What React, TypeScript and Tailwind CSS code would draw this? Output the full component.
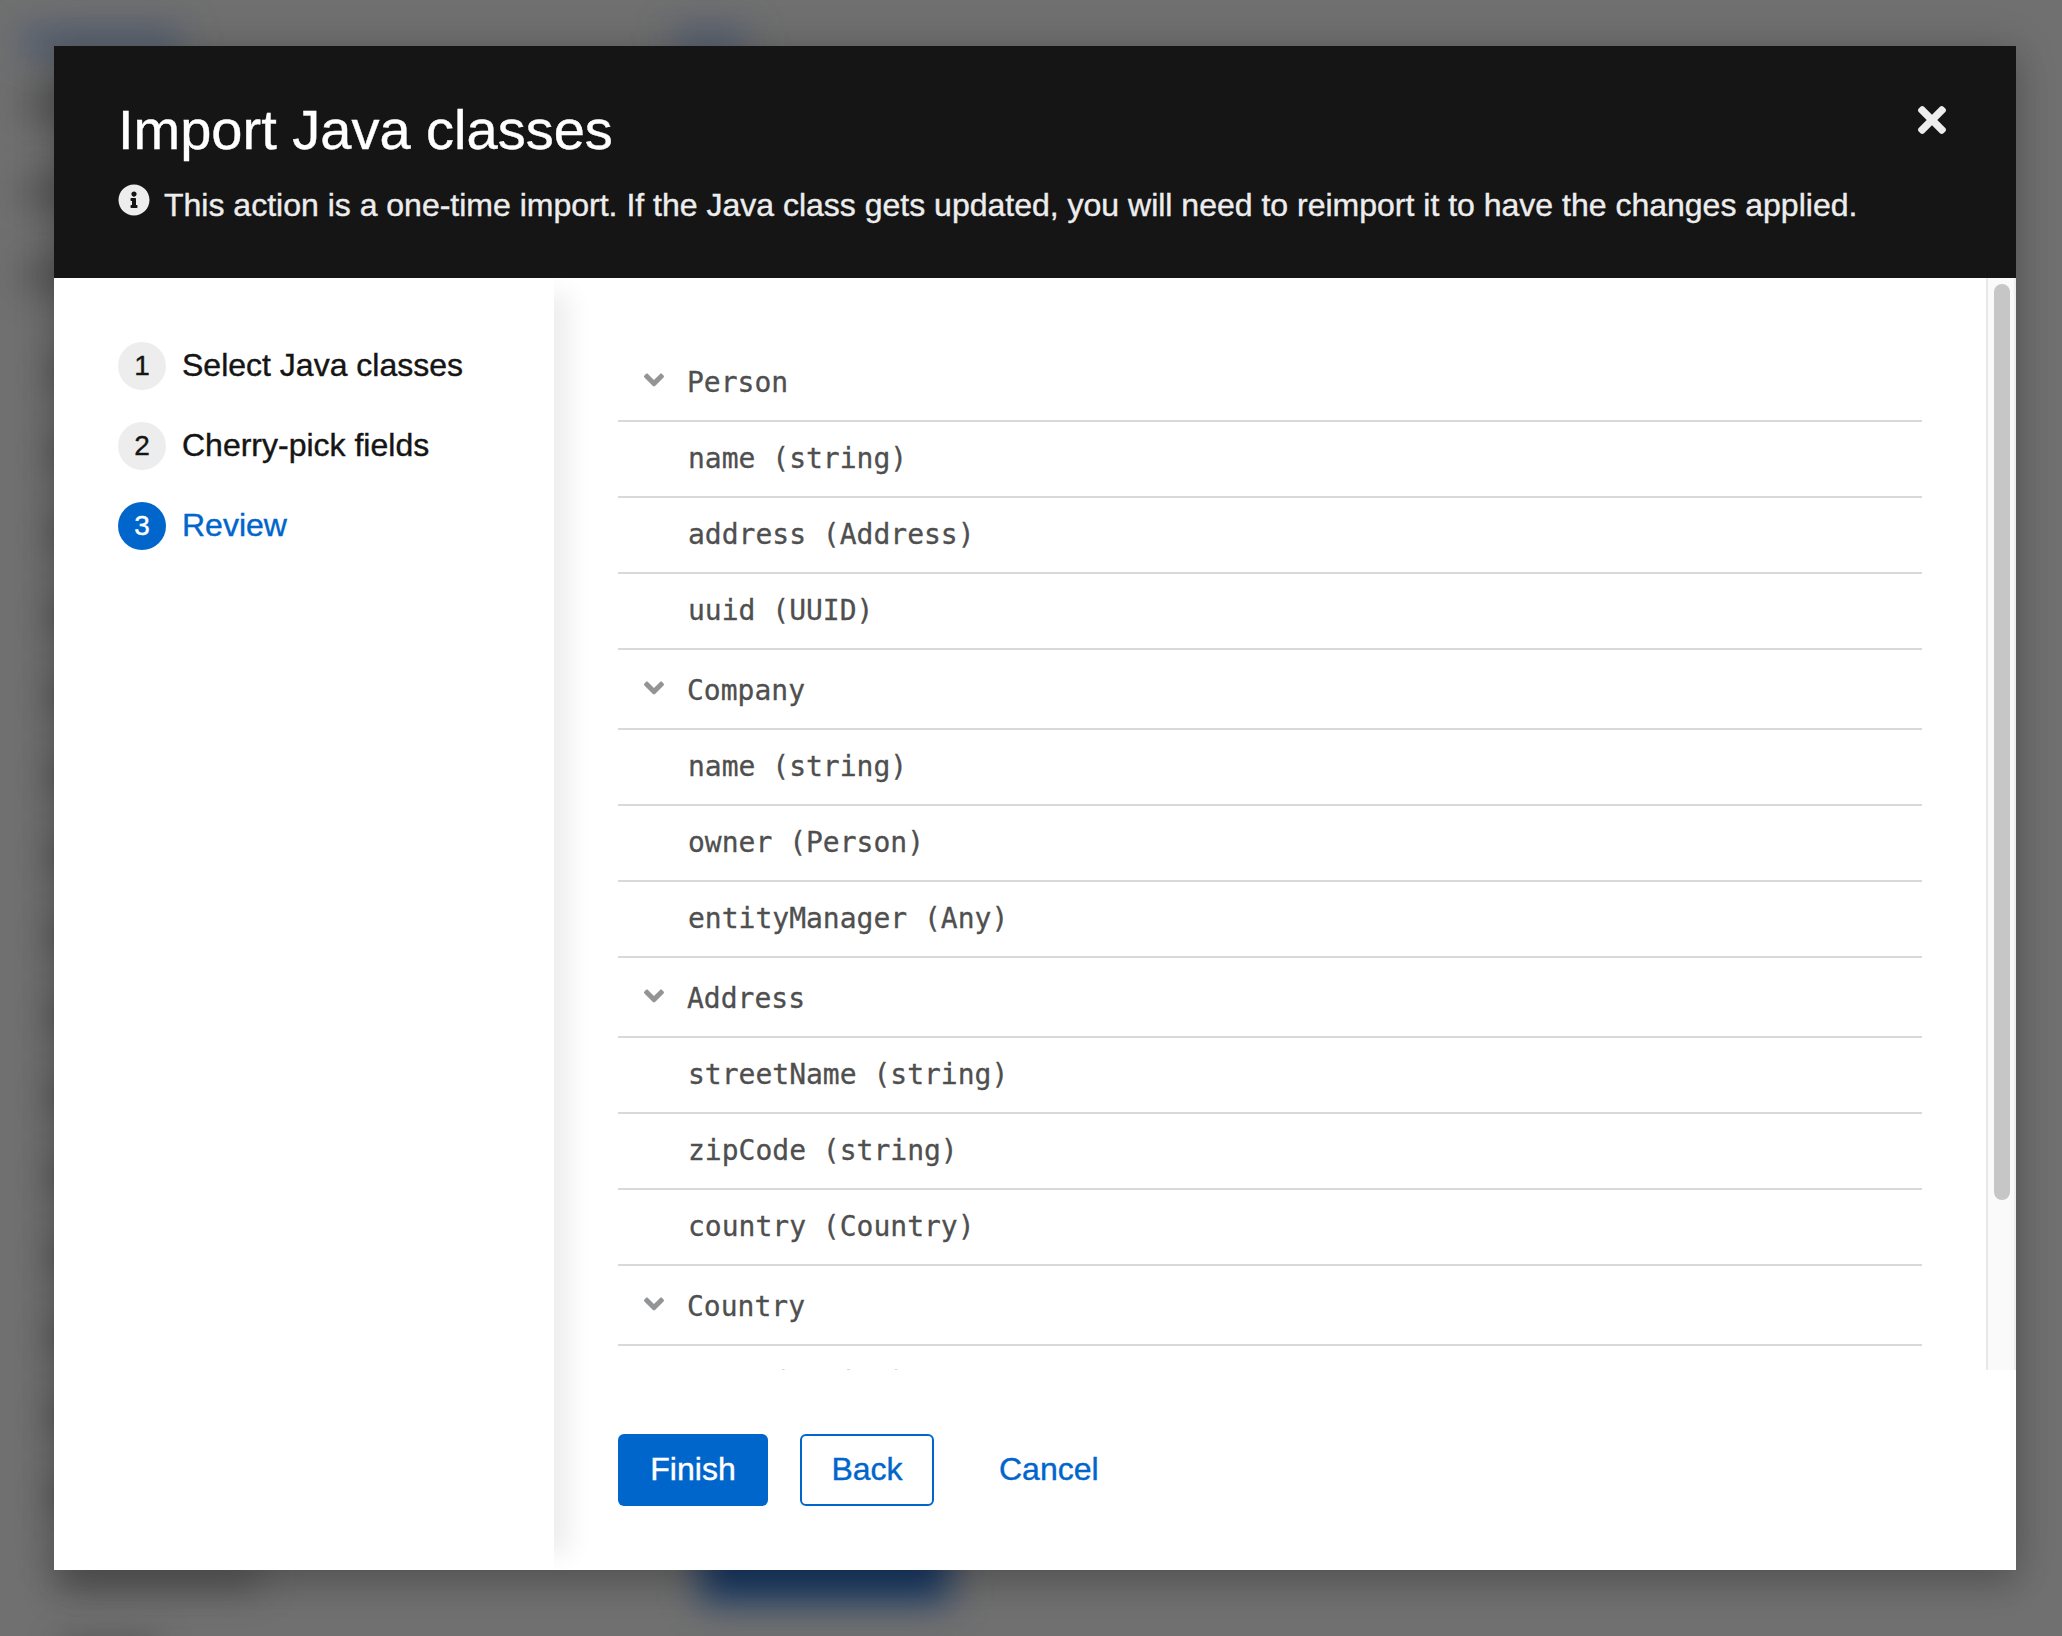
import { FaAngleDown, FaInfoCircle } from "react-icons/fa";

const steps = [
  { n: 1, label: "Select Java classes", current: false },
  { n: 2, label: "Cherry-pick fields", current: false },
  { n: 3, label: "Review", current: true },
];

const classes = [
  { name: "Person", fields: ["name (string)", "address (Address)", "uuid (UUID)"] },
  { name: "Company", fields: ["name (string)", "owner (Person)", "entityManager (Any)"] },
  { name: "Address", fields: ["streetName (string)", "zipCode (string)", "country (Country)"] },
  { name: "Country", fields: ["name (string)"] },
];

const lineYs = [370, 450, 530, 612, 692, 772, 852, 932, 1012, 1092, 1172, 1252, 1332, 1412, 1492];

function Backdrop() {
  return (
    <div className="absolute inset-0 overflow-hidden">
      <div className="absolute left-[20px] top-[28px] h-[28px] w-[162px] bg-[#2c4670]/50 blur-[18px]" />
      <div className="absolute left-[672px] top-[28px] h-[28px] w-[76px] bg-[#2c4670]/50 blur-[18px]" />
      <div className="absolute left-[22px] top-[92px] h-[26px] w-[100px] bg-[#333]/50 blur-[18px]" />
      <div className="absolute left-[22px] top-[180px] h-[26px] w-[100px] bg-[#333]/50 blur-[18px]" />
      <div className="absolute left-[22px] top-[262px] h-[26px] w-[100px] bg-[#333]/50 blur-[18px]" />
      {lineYs.map((y) => (
        <div key={y} className="absolute left-[50px] h-[26px] w-[100px] bg-[#333]/40 blur-[16px]" style={{ top: y - 9 }} />
      ))}
      <div className="absolute left-[60px] top-[1562px] h-[26px] w-[200px] bg-[#333]/50 blur-[18px]" />
      <div className="absolute left-[60px] top-[1640px] h-[26px] w-[100px] bg-[#333]/50 blur-[16px]" />
      <div className="absolute left-[700px] top-[1530px] h-[72px] w-[250px] bg-[#193a66] blur-[18px]" />
    </div>
  );
}

export default function App() {
  return (
    <div className="relative flex h-[1636px] w-[2062px] overflow-hidden bg-[#707070] pl-[54px] pt-[46px] font-['Liberation_Sans',Arial,sans-serif] text-[32px] leading-[48px] text-[#151515] [-webkit-text-stroke:0.4px]">
      <Backdrop />
      <div className="relative flex h-[1524px] w-[1962px] flex-col bg-white shadow-[0_16px_32px_rgba(3,3,3,0.16),0_0_40px_rgba(3,3,3,0.16)]">
        <header className="flex h-[232px] shrink-0 justify-between bg-[#151515] pl-16 pr-[70px] pt-12 text-white">
          <div>
            <h1 className="whitespace-nowrap text-[56px] leading-[72px]">Import Java classes</h1>
            <div className="flex text-[#ededed]">
              <FaInfoCircle className="mt-[18px] size-8 shrink-0" />
              <p className="ml-[14px] mt-[15px] whitespace-nowrap">
                This action is a one-time import. If the Java class gets updated, you will need to reimport it to have the changes applied.
              </p>
            </div>
          </div>
          <button className="mt-3 size-7 shrink-0" aria-label="Close">
            <svg viewBox="0 80 352 352" className="size-7" fill="#ededed">
              <path d="M242.72 256l100.07-100.07c12.28-12.28 12.28-32.19 0-44.48l-22.24-22.24c-12.28-12.28-32.19-12.28-44.48 0L176 189.28 75.93 89.21c-12.28-12.28-32.19-12.28-44.48 0L9.21 111.45c-12.28 12.28-12.28 32.19 0 44.48L109.28 256 9.21 356.07c-12.28 12.28-12.28 32.19 0 44.48l22.24 22.24c12.28 12.28 32.2 12.28 44.48 0L176 322.72l100.07 100.07c12.28 12.28 32.2 12.28 44.48 0l22.24-22.24c12.28-12.28 12.28-32.19 0-44.48L242.72 256z" />
            </svg>
          </button>
        </header>

        <div className="flex min-h-0 flex-1 overflow-hidden">
          <nav className="flex w-[500px] shrink-0 flex-col gap-8 bg-white pl-16 pt-16 shadow-[32px_0_24px_-16px_rgba(3,3,3,0.07)]">
            {steps.map((s) => (
              <div key={s.n} className="flex h-12 items-center">
                <span
                  className={
                    s.current
                      ? "flex size-12 items-center justify-center rounded-full bg-[#0066cc] text-[28px] text-white"
                      : "flex size-12 items-center justify-center rounded-full bg-[#ededed] text-[28px]"
                  }
                >
                  {s.n}
                </span>
                <span className={s.current ? "relative -top-px ml-4 text-[#0066cc]" : "relative -top-px ml-4"}>{s.label}</span>
              </div>
            ))}
          </nav>

          <div className="flex min-w-0 flex-1 flex-col">
            <div className="flex h-[1092px] shrink-0 overflow-hidden">
              <div className="ml-16 w-[1304px] shrink-0 pt-16 font-['DejaVu_Sans_Mono',monospace] text-[28px] leading-[42px] text-[#4f4f4f] [-webkit-text-stroke:0.3px]">
                {classes.map((c) => (
                  <section key={c.name}>
                    <div className="flex h-[80px] items-center border-b-2 border-[#d9d9d9] pl-[26px]">
                      <FaAngleDown className="relative -top-px h-8 w-5 text-[#929496]" />
                      <span className="ml-[23px] pt-1">{c.name}</span>
                    </div>
                    {c.fields.map((f) => (
                      <div key={f} className="flex h-[76px] items-center border-b-2 border-[#d9d9d9] pl-[70px]">
                        {f}
                      </div>
                    ))}
                  </section>
                ))}
              </div>
              <div className="ml-auto w-[30px] border-x-2 border-l-[#e8e8e8] border-r-[#ededed] bg-[#fafafa] pl-[6px] pt-[6px]">
                <div className="h-[916px] w-4 rounded-full bg-[#c6c6c6]" />
              </div>
            </div>
            <footer className="flex gap-8 pl-16 pt-16">
              <button className="h-[72px] w-[150px] rounded-[6px] bg-[#0066cc] pb-0.5 text-white">Finish</button>
              <button className="h-[72px] w-[134px] rounded-[6px] border-2 border-[#0066cc] pb-0.5 text-[#0066cc]">Back</button>
              <button className="h-[72px] pb-0.5 pl-[33px] pr-8 text-[#0066cc]">Cancel</button>
            </footer>
          </div>
        </div>
      </div>
    </div>
  );
}
